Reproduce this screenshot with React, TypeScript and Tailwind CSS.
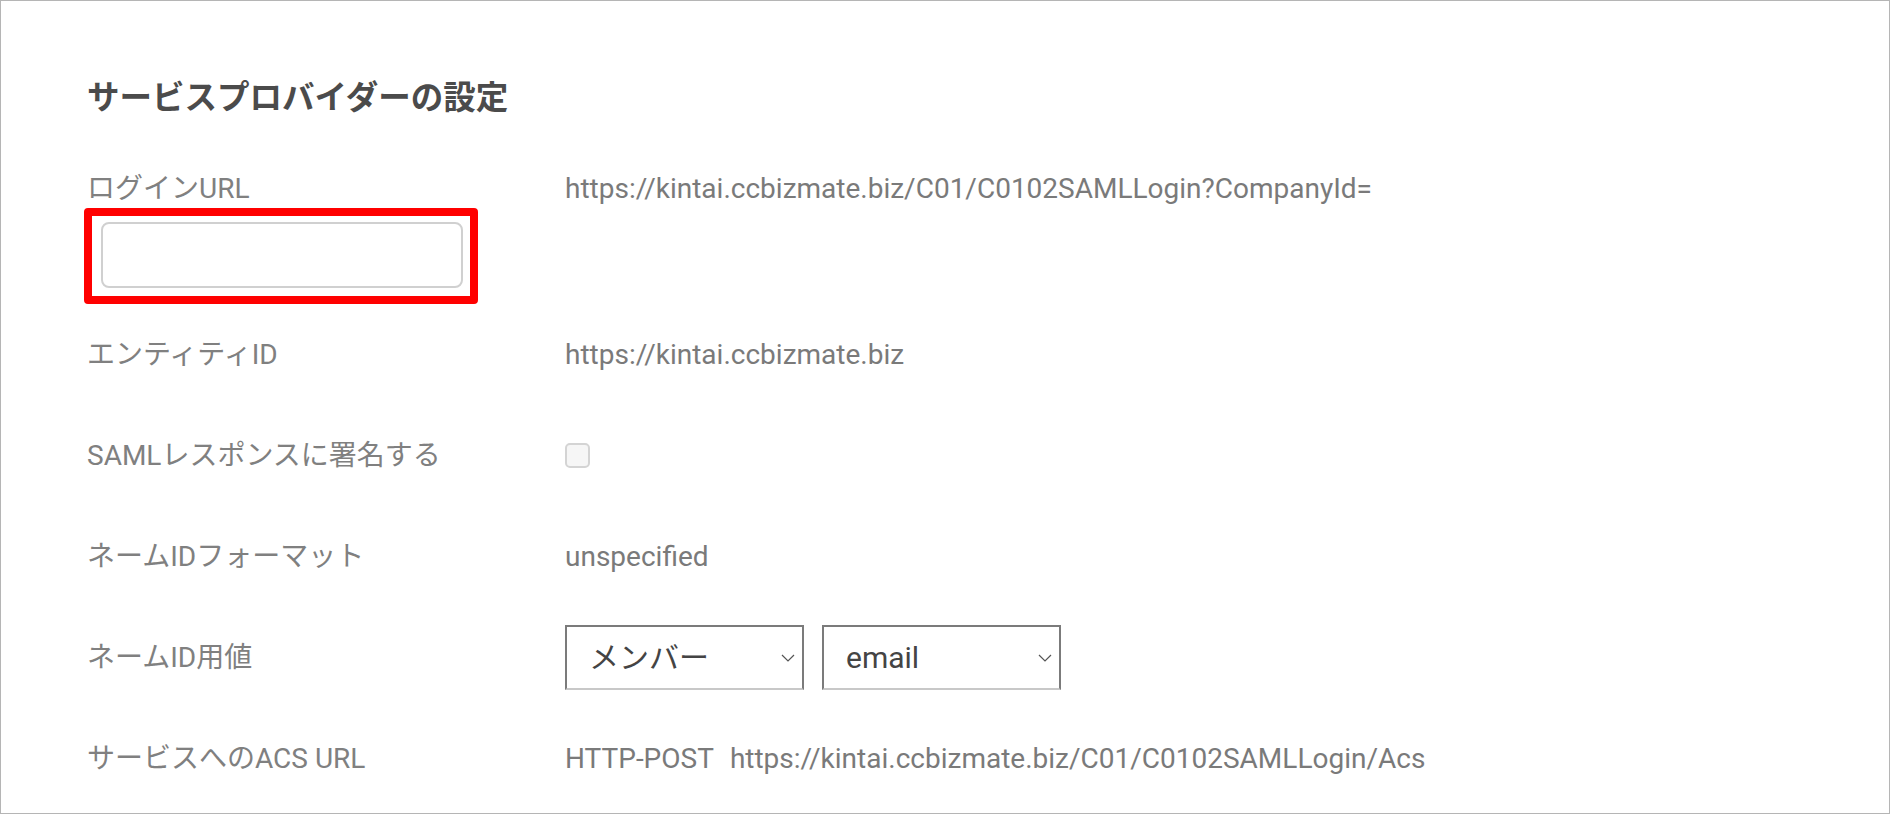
const font = { fontFamily: 'Roboto, "Noto Sans CJK JP", sans-serif' };

function Chevron() {
  return (
    <svg
      className="pointer-events-none absolute right-[9px] top-1/2 -translate-y-1/2"
      width="14"
      height="9"
      viewBox="0 0 14 9"
      fill="none"
      aria-hidden
    >
      <path d="M1 1.5l6 6 6-6" stroke="#555" strokeWidth="1.2" />
    </svg>
  );
}

function Select({ value, options }: { value: string; options: string[] }) {
  return (
    <div className="relative">
      <select
        defaultValue={value}
        className="h-[65px] w-[239px] appearance-none border-2 border-[#7b7b7b] border-b-[#c8c8c8] bg-white pl-[22px] text-[30px] text-[#444] outline-none"
      >
        {options.map((o) => (
          <option key={o}>{o}</option>
        ))}
      </select>
      <Chevron />
    </div>
  );
}

function Row({ label, children }: { label: string; children: React.ReactNode }) {
  return (
    <div className="flex h-[101px] items-center">
      <div className="w-[478px] text-[28px] leading-[40px] text-[#808080]">{label}</div>
      <div className="flex items-center text-[28px] leading-[40px] text-[#7a7a7a]">{children}</div>
    </div>
  );
}

export default function App() {
  return (
    <div
      style={font}
      className="box-border h-[814px] w-[1890px] border border-[#b5b5b5] bg-white pl-[86px] pt-[77px]"
    >
      <h2 className="text-[32.5px] font-bold leading-[40px] text-[#4b4b4b]">
        サービスプロバイダーの設定
      </h2>

      <div className="mt-[51px]">
        <div className="flex text-[28px] leading-[39px]">
          <div className="w-[478px] text-[#808080]">ログインURL</div>
          <div className="text-[#7a7a7a]">
            https://kintai.ccbizmate.biz/C01/C0102SAMLLogin?CompanyId=
          </div>
        </div>
        <div className="-ml-[3px] box-border h-[96px] w-[394px] rounded-[4px] border-[8px] border-[#ff0000] pl-[9px] pt-[6px]">
          <input
            type="text"
            className="box-border h-[66px] w-[362px] rounded-[8px] border-2 border-[#d0d0d0] bg-white outline-none"
          />
        </div>
      </div>

      <Row label="エンティティID">https://kintai.ccbizmate.biz</Row>
      <Row label="SAMLレスポンスに署名する">
        <input
          type="checkbox"
          className="m-0 box-border h-[25px] w-[25px] appearance-none rounded-[5px] border-2 border-[#d4d4d4] bg-[#f6f6f6]"
        />
      </Row>
      <Row label="ネームIDフォーマット">unspecified</Row>
      <Row label="ネームID用値">
        <div className="flex gap-[18px]">
          <Select value="メンバー" options={["メンバー"]} />
          <Select value="email" options={["email"]} />
        </div>
      </Row>
      <Row label="サービスへのACS URL">
        <span>HTTP-POST</span>
        <span className="ml-[16px]">https://kintai.ccbizmate.biz/C01/C0102SAMLLogin/Acs</span>
      </Row>
    </div>
  );
}
